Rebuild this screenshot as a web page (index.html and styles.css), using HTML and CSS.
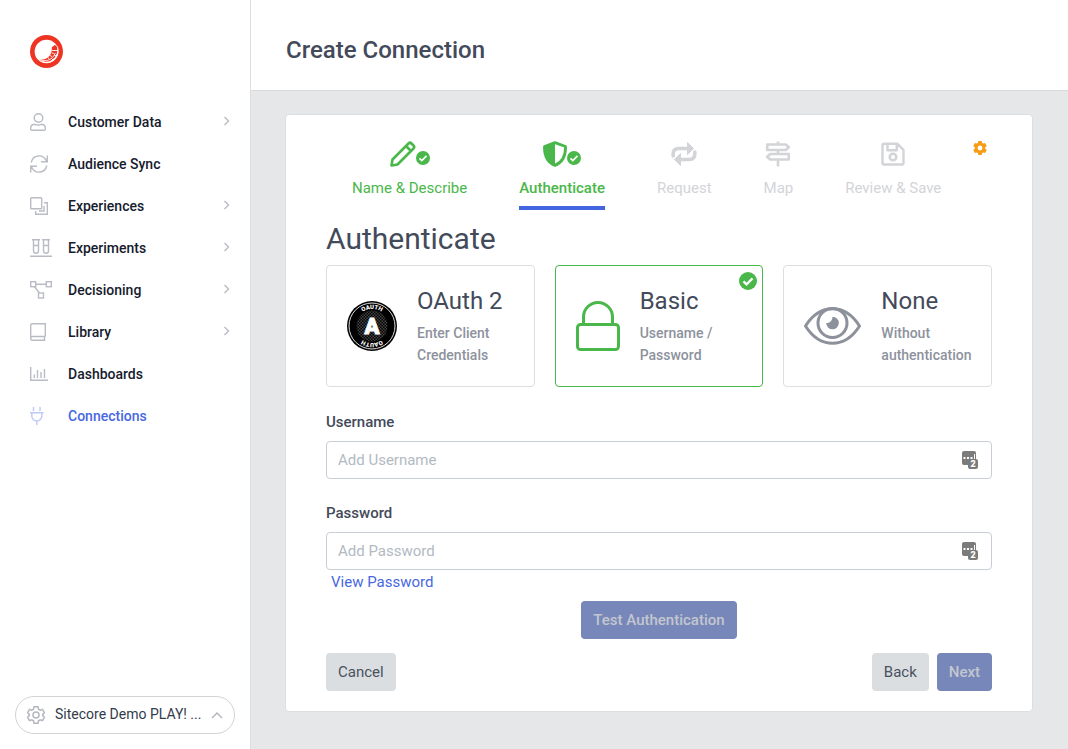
FILE: index.html
```html
<!DOCTYPE html>
<html lang="en">
<head>
<meta charset="utf-8">
<meta name="viewport" content="width=device-width, initial-scale=1">
<title>Create Connection</title>
<link rel="stylesheet" href="styles.css">
</head>
<body>
<svg class="defs" width="0" height="0" aria-hidden="true">
  <symbol id="chevron" viewBox="0 0 8 10"><path d="M1.500 1 5.500 5l-4 4" fill="none" stroke="currentColor" stroke-width="1.400"/></symbol>
  <symbol id="check" viewBox="0 0 18 18"><circle cx="9" cy="9" r="9" fill="currentColor"/><path d="m4.500 9.400 3 3 6-6" fill="none" stroke="#fff" stroke-width="2.200"/></symbol>
</svg>
<div class="app">
  <aside class="sidebar">
    <a class="logo" href="#" aria-label="Home">
      <svg width="33" height="33" viewBox="0 0 34 34">
        <circle cx="17" cy="17" r="17" fill="#ee3524"/>
        <circle cx="17" cy="17" r="12.200" fill="#fff"/>
        <path d="M22.500 12.500 25.500 10.300 27.600 11.500A12.200 12.200 0 0 1 8.500 25C15 27 23.500 22 22.500 12.500Z" fill="#ee3524"/>
        <path d="M6.500 22.500C10 29 21 31 26.500 23.500 29.500 19.500 29.500 15 28 11.500" fill="none" stroke="#fff" stroke-width=".9"/>
        <path d="M9.500 25c7 3.500 14 .5 16.500-6.500M22.500 16l6 0M22.300 18.500l2.200 .5M20.500 21l2 1.200M18.500 23l1.200 2M24.700 20.500l3 1.500M22 24l2 2" fill="none" stroke="#fff" stroke-width=".9"/>
      </svg>
    </a>
    <nav class="nav">
      <a class="nav-item" href="#">
        <span class="nav-icon"><svg width="17" height="18" viewBox="0 0 17 18"><circle cx="8.500" cy="5" r="4.300"/><path d="M4.500 11.300C2 11.600.700 13 .700 15v1.200q0 1 1 1h12.600q1 0 1-1V15c0-2-1.300-3.400-3.800-3.700-2 .8-5 .8-7 0Z"/></svg></span>
        <span class="nav-text">Customer Data</span><svg class="nav-arrow"><use href="#chevron"/></svg>
      </a>
      <a class="nav-item" href="#">
        <span class="nav-icon"><svg width="18" height="18" viewBox="0 0 18 18"><path d="M1.200 7.500C3-.500 13-1.500 16.500 6M17.300.500v6.300H11M16.800 10.500C15 18.500 5 19.500 1.500 12M.700 17.500v-6.300H7"/></svg></span>
        <span class="nav-text">Audience Sync</span>
      </a>
      <a class="nav-item" href="#">
        <span class="nav-icon"><svg width="18" height="18" viewBox="0 0 18 18"><rect x=".7" y=".7" width="11" height="11" rx=".8"/><path d="M14 5.700h3.300v11.600H5.700V14M14 9v5H9"/></svg></span>
        <span class="nav-text">Experiences</span><svg class="nav-arrow"><use href="#chevron"/></svg>
      </a>
      <a class="nav-item" href="#">
        <span class="nav-icon"><svg width="22" height="18" viewBox="0 0 22 18"><path d="M2 .7h8M12 .7h8M3.500.700v11a2.500 2.500 0 0 0 5 0v-11M13.500.700v11a2.500 2.500 0 0 0 5 0v-11M3.500 6.500h5M13.500 6.500h5M0 17.300h22"/></svg></span>
        <span class="nav-text">Experiments</span><svg class="nav-arrow"><use href="#chevron"/></svg>
      </a>
      <a class="nav-item" href="#">
        <span class="nav-icon"><svg width="22" height="18" viewBox="0 0 22 18"><rect x=".7" y=".7" width="5" height="5"/><rect x="16.300" y=".7" width="5" height="5"/><rect x="8.500" y="12" width="5" height="5"/><path d="M5.700 3.300h10.600M4.500 5.700l5 6.300"/></svg></span>
        <span class="nav-text">Decisioning</span><svg class="nav-arrow"><use href="#chevron"/></svg>
      </a>
      <a class="nav-item" href="#">
        <span class="nav-icon"><svg width="17" height="18" viewBox="0 0 17 18"><path d="M15.300 13.500V.700H2.500Q.7.700.7 2.500v13q0 1.800 1.800 1.800h12.800M15.300 13.500H2.500q-1.500 0-1.800 1.500M14.500 13.500v3.800"/></svg></span>
        <span class="nav-text">Library</span><svg class="nav-arrow"><use href="#chevron"/></svg>
      </a>
      <a class="nav-item" href="#">
        <span class="nav-icon"><svg width="18" height="14" viewBox="0 0 18 14"><path d="M.7 0v13.300H18M4.300 7.500V11M7.500 3v8M11 5v6M14.500 2v9"/></svg></span>
        <span class="nav-text">Dashboards</span>
      </a>
      <a class="nav-item nav-item-active" href="#" aria-current="page">
        <span class="nav-icon"><svg width="14" height="18" viewBox="0 0 14 18"><path d="M3.500 0v4M10 0v4M0 5.700h13.500M1.800 5.700V9a5 5 0 0 0 10 0V5.700M6.800 14v4"/></svg></span>
        <span class="nav-text">Connections</span>
      </a>
    </nav>
    <button class="account" type="button">
      <svg class="account-gear" width="18" height="18" viewBox="0 0 18 18"><path d="M7 .8h4l.5 2.400 1.700 1 2.300-.8 2 3.400L15.700 8.400v1.200l1.800 1.600-2 3.400-2.300-.8-1.700 1-.5 2.400H7l-.5-2.400-1.700-1-2.300.8-2-3.400 1.800-1.600V8.400L.5 6.800l2-3.400 2.300.8 1.700-1Z"/><circle cx="9" cy="9" r="3"/></svg>
      <span class="account-name">Sitecore Demo PLAY! ...</span>
      <svg class="account-arrow" width="12" height="8" viewBox="0 0 12 8"><path d="m1 7 5-5 5 5"/></svg>
    </button>
  </aside>

  <div class="page">
    <header class="topbar"><h1 class="page-title">Create Connection</h1></header>
    <main class="content">
      <form class="wizard">
        <ol class="steps">
          <li class="step step-done">
            <span class="step-icon">
              <svg width="26" height="26" viewBox="0 0 26 26"><path d="M1.500 24.500 2.500 18.500 18.500 2.500q1.500-1.500 3 0l2 2q1.500 1.500 0 3L7.500 23.500l-6 1ZM16 5l5 5" fill="none" stroke="currentColor" stroke-width="2.600" stroke-linejoin="round"/></svg><svg class="step-check"><use href="#check"/></svg>
            </span>
            <span class="step-name">Name &amp; Describe</span>
          </li>
          <li class="step step-done step-current" aria-current="step">
            <span class="step-icon">
              <svg width="24" height="26" viewBox="0 0 24 26"><path d="M12 1.600 22.500 5.500C22.800 15 19 21.500 12 24.400 5 21.500 1.200 15 1.500 5.500Z" fill="none" stroke="currentColor" stroke-width="2.800" stroke-linejoin="round"/><path d="M12 1v23.500C4.500 21.500 1 15 1.300 5.200Z" fill="currentColor"/></svg><svg class="step-check"><use href="#check"/></svg>
            </span>
            <span class="step-name">Authenticate</span>
          </li>
          <li class="step">
            <span class="step-icon"><svg width="26" height="26" viewBox="0 0 26 26"><path d="M2.200 15V13q0-5.500 5.500-5.500H17M23.800 11V13q0 5.500-5.500 5.500H9" fill="none" stroke="currentColor" stroke-width="3.600" stroke-linecap="round"/><path d="M16.500 1.500v12l6-6ZM9.500 12.500v12l-6-6Z" fill="currentColor" stroke="currentColor" stroke-linejoin="round"/></svg></span>
            <span class="step-name">Request</span>
          </li>
          <li class="step">
            <span class="step-icon"><svg width="26" height="26" viewBox="0 0 26 26"><path d="M2.200 3.500h18.500l3.200 2.700L20.700 9H2.200ZM23.800 13H5.300l-3.200 2.700 3.200 2.800h18.500ZM13 .500V3.500M13 9v4M13 18.500v7" fill="none" stroke="currentColor" stroke-width="2.600" stroke-linejoin="round"/></svg></span>
            <span class="step-name">Map</span>
          </li>
          <li class="step">
            <span class="step-icon"><svg width="26" height="26" viewBox="0 0 26 26"><path d="M4 2.800h13.500l6 6V22q0 1.500-1.500 1.500H4q-1.500 0-1.500-1.500V4.300Q2.500 2.800 4 2.800ZM7.500 3v6.300h9.300V3" fill="none" stroke="currentColor" stroke-width="2.400" stroke-linejoin="round"/><circle cx="13" cy="16" r="3.300" fill="none" stroke="currentColor" stroke-width="2.600"/></svg></span>
            <span class="step-name">Review &amp; Save</span>
          </li>
          <li class="steps-tools">
            <button class="settings" type="button" aria-label="Settings"><svg width="14" height="14" viewBox="0 0 14 14"><path fill="currentColor" fill-rule="evenodd" d="M5.300 0h3.400l.4 2 1 .6 2-.7 1.700 3-1.600 1.300v1.600l1.600 1.300-1.700 3-2-.7-1 .6-.4 2H5.300l-.4-2-1-.6-2 .7-1.700-3 1.600-1.300V6.200L.2 4.900l1.700-3 2 .7 1-.6ZM7 4.600a2.400 2.400 0 1 0 0 4.800 2.400 2.400 0 0 0 0-4.800Z"/></svg></button>
          </li>
        </ol>

        <h2 class="section-title">Authenticate</h2>
        <div class="options">
          <button class="option" type="button">
            <svg class="badge" width="50" height="50" viewBox="0 0 50 50">
              <defs>
                <pattern id="mesh" width="3" height="3" patternUnits="userSpaceOnUse"><path d="M0 0h1.500v1.500H0zM1.500 1.500H3V3H1.500z" fill="#444"/></pattern>
                <path id="arc-top" d="M8 25a17 17 0 0 1 34 0"/>
                <path id="arc-bottom" d="M42 25a17 17 0 0 1-34 0"/>
              </defs>
              <circle cx="25" cy="25" r="25" fill="#000"/>
              <circle cx="25" cy="25" r="23" fill="none" stroke="#ddd" stroke-width="1"/>
              <circle cx="25" cy="25" r="15.500" fill="url(#mesh)"/>
              <text class="badge-ring"><textPath href="#arc-top" startOffset="50%">OAUTH</textPath></text>
              <text class="badge-ring"><textPath href="#arc-bottom" startOffset="50%">OAUTH</textPath></text>
              <text x="25" y="33" class="badge-letter">A</text>
            </svg>
            <span class="option-body"><span class="option-name">OAuth 2</span><span class="option-note">Enter Client Credentials</span></span>
          </button>
          <button class="option option-selected" type="button" aria-pressed="true">
            <svg class="option-icon" width="44" height="50" viewBox="0 0 44 50"><rect x="1.500" y="23.500" width="41" height="25" rx="3"/><path d="M7.500 23V16a14.500 14.500 0 0 1 29 0v7"/></svg>
            <span class="option-body"><span class="option-name">Basic</span><span class="option-note">Username / Password</span></span>
            <svg class="option-check"><use href="#check"/></svg>
          </button>
          <button class="option" type="button">
            <svg class="option-icon" width="57" height="38" viewBox="0 0 57 38"><path d="M1.500 19C16-4 41-4 55.500 19 41 42 16 42 1.500 19Z" stroke-linejoin="round"/><circle cx="28.500" cy="16" r="14.500"/><path class="pupil" d="M28.500 9.700a6.300 6.300 0 1 1-6.300 6.300c3.500 0 6-2 6.300-6.300Z"/></svg>
            <span class="option-body"><span class="option-name">None</span><span class="option-note">Without authentication</span></span>
          </button>
        </div>

        <div class="field">
          <label class="field-label" for="username">Username</label>
          <span class="field-box"><input id="username" class="field-input" type="text" placeholder="Add Username">
            <svg class="vault" viewBox="0 0 18 20"><rect x="1" y="1" width="14" height="14" rx="2" fill="#7b7b7b"/><path d="M2.500 7h2v2h-2zM6 7h2v2H6zM9.500 7h2v2h-2zM13 4h1v5h-1z" fill="#fff"/><rect x="7" y="9" width="10" height="10" rx="2" fill="#7b7b7b"/><text x="12" y="17" class="vault-count">2</text></svg></span>
        </div>
        <div class="field">
          <label class="field-label" for="password">Password</label>
          <span class="field-box"><input id="password" class="field-input" type="password" placeholder="Add Password">
            <svg class="vault" viewBox="0 0 18 20"><rect x="1" y="1" width="14" height="14" rx="2" fill="#7b7b7b"/><path d="M2.500 7h2v2h-2zM6 7h2v2H6zM9.500 7h2v2h-2zM13 4h1v5h-1z" fill="#fff"/><rect x="7" y="9" width="10" height="10" rx="2" fill="#7b7b7b"/><text x="12" y="17" class="vault-count">2</text></svg></span>
        </div>
        <a class="view-link" href="#">View Password</a>
        <div class="test-row"><button class="btn btn-primary" type="button" disabled>Test Authentication</button></div>
        <footer class="actions">
          <button class="btn btn-plain" type="button">Cancel</button>
          <span class="actions-end"><button class="btn btn-plain" type="button">Back</button><button class="btn btn-primary" type="submit" disabled>Next</button></span>
        </footer>
      </form>
    </main>
  </div>
</div>
</body>
</html>
```
FILE: styles.css
```css
* { box-sizing: border-box; }
body { margin: 0; font: 400 15px/22px Roboto, "Liberation Sans", sans-serif; color: #434a5a; background: #fff; }
h1, h2, ol { margin: 0; padding: 0; font-weight: 400; }
a { text-decoration: none; }
button, input { font: inherit; color: inherit; }
button { cursor: pointer; }
svg { display: block; flex: none; }
.defs { position: absolute; }

.app { display: flex; min-height: 100vh; }

.sidebar { flex: none; width: 251px; display: flex; flex-direction: column; padding: 35px 15px 15px; border-right: 1px solid #dcdee0; }
.logo { align-self: flex-start; margin-left: 15px; }
.nav { display: flex; flex-direction: column; padding: 33px 4px 0 15px; flex: 1; }
.nav-item { display: flex; align-items: center; height: 42px; color: #161b2e; font-size: 14px; font-weight: 500; }
.nav-icon { width: 38px; color: #b9bcc4; }
.nav-icon svg { fill: none; stroke: currentColor; stroke-width: 1.4; }
.nav-text { flex: 1; }
.nav-arrow { width: 8px; height: 10px; margin-bottom: 2px; color: #b9bcc4; }
.nav-item-active { color: #4768e0; }
.nav-item-active .nav-icon { color: #bdc9f6; }

.account { display: flex; align-items: center; height: 38px; padding: 0 11px; border: 1px solid #d2d3d7; border-radius: 19px; background: #fff; font-size: 14px; color: #333c4b; text-align: left; }
.account svg { fill: none; stroke: #b4b7be; stroke-width: 1.5; }
.account-name { flex: 1; margin-left: 10px; padding-bottom: 2px; white-space: nowrap; }

.page { flex: 1; min-width: 0; display: flex; flex-direction: column; }
.topbar { display: flex; align-items: center; height: 91px; padding: 10px 35px 0; border-bottom: 1px solid #d9dbdd; }
.page-title { font-size: 24px; line-height: 32px; font-weight: 500; }
.content { flex: 1; padding: 23px 35px 36px 34px; background: #e6e7e9; }

.wizard { display: flex; flex-direction: column; padding: 24px 40px 20px; border: 1px solid #dcdfe2; border-radius: 4px; background: #fff; }
.steps { display: flex; list-style: none; color: #d3d4d8; }
.step { display: flex; flex-direction: column; align-items: center; padding: 0 26px; }
.step-icon { display: flex; align-items: flex-end; height: 28px; }
.step-check { width: 14px; height: 14px; margin-bottom: 2px; }
.step-name { height: 43px; padding-top: 10px; white-space: nowrap; line-height: 22px; }
.step-done { color: #49b749; }
.step-current .step-name { font-weight: 500; border-bottom: 4px solid #4265e1; }
.steps-tools { margin-left: 6px; }
.settings { display: block; margin-top: 2px; padding: 0; border: 0; background: none; color: #f79d13; }

.section-title { margin-top: 11px; font-size: 30px; line-height: 36px; font-weight: 400; }
.options { display: grid; grid-template-columns: repeat(3, minmax(0, 1fr)); gap: 20px; margin-top: 8px; }
.option { position: relative; display: flex; align-items: center; height: 122px; padding: 0 20px; border: 1px solid #dcdee1; border-radius: 4px; background: #fff; text-align: left; }
.option-icon { fill: none; stroke: #8c919b; stroke-width: 3; }
.pupil { fill: #8c919b; stroke: none; }
.option-body { display: flex; flex-direction: column; margin-left: 20px; }
.option-name { font-size: 24px; line-height: 30px; }
.option-note { margin-top: 6px; font-size: 14px; font-weight: 500; line-height: 22px; color: #8d929d; }
.option-selected { border-color: #49b749; }
.option-selected .option-icon { stroke: #49b749; }
.option-check { position: absolute; top: 6px; right: 5px; width: 18px; height: 18px; color: #49b749; }
.badge-letter { font: 900 22px Roboto, sans-serif; fill: #fff; stroke: #fff; stroke-width: 1; text-anchor: middle; }
.badge-ring { font: 900 6px Roboto, sans-serif; fill: #fff; text-anchor: middle; }

.field { display: flex; flex-direction: column; gap: 8px; margin-top: 23px; }
.options + .field { margin-top: 24px; }
.field-label { font-weight: 500; }
.field-box { position: relative; display: block; }
.field-input { display: block; width: 100%; height: 38px; padding: 0 44px 0 11px; border: 1px solid #c9ced6; border-radius: 4px; background: #fff; outline: 0; }
.field-input::placeholder { color: #b2bac3; opacity: 1; }
.vault { position: absolute; right: 13px; top: 9px; width: 18px; height: 20px; }
.vault-count { font: 900 9px Roboto, sans-serif; fill: #fff; text-anchor: middle; }
.view-link { align-self: flex-start; margin: 1px 0 0 5px; color: #4768e0; }
.test-row { display: flex; justify-content: center; margin-top: 8px; }
.btn { height: 38px; padding: 0 12px; border: 0; border-radius: 4px; }
.btn-plain { background: #dadee1; color: #4a5160; }
.btn-primary { background: #7787b9; color: #c3c6cf; font-weight: 500; }
.actions { display: flex; justify-content: space-between; margin-top: 14px; }
.actions-end { display: flex; gap: 8px; }
```
